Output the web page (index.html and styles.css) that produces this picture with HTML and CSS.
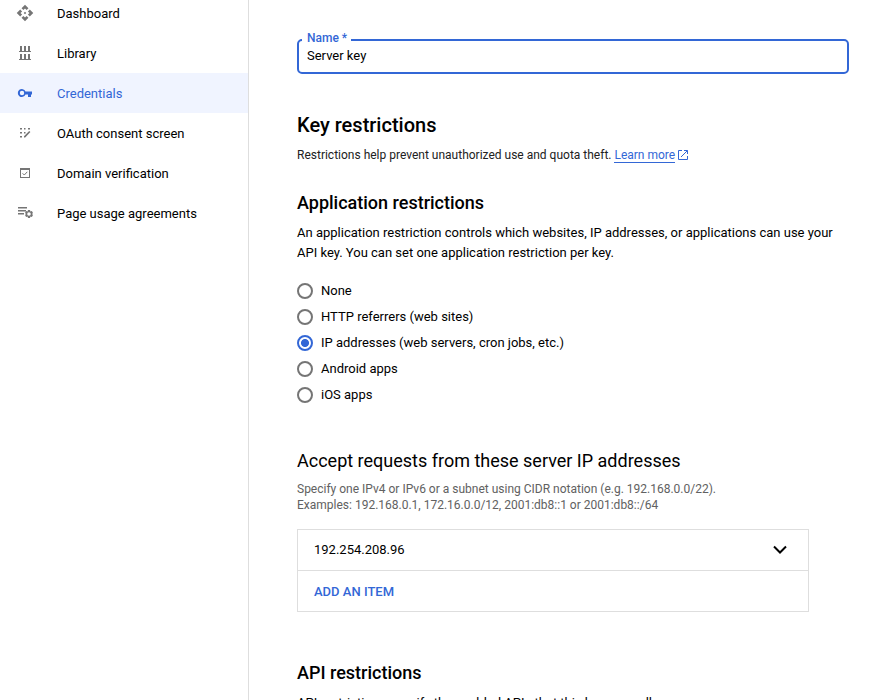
FILE: index.html
```html
<!DOCTYPE html>
<html lang="en">
<head>
<meta charset="utf-8">
<title>Credentials</title>
<link rel="stylesheet" href="styles.css">
</head>
<body>
<div class="layout">
  <nav class="sidebar">
    <a class="nav-item">
      <svg class="nav-icon" viewBox="0 0 24 24"><path d="M13.700 12L12 13.700 10.300 12l1.700-1.700zM12 6l2.120 2.120 2.500-2.500L12 1 7.380 5.620l2.500 2.500zM6 12l2.120-2.120-2.500-2.500L1 12l4.620 4.620 2.500-2.500zM18 12l-2.120 2.120 2.500 2.500L23 12l-4.620-4.620-2.500 2.500zM12 18l-2.120-2.120-2.500 2.500L12 23l4.620-4.620-2.500-2.500z"/></svg>
      <span>Dashboard</span>
    </a>
    <a class="nav-item">
      <svg class="nav-icon" viewBox="0 0 18 18"><path d="M3 7h12v1H3zM4 2h2v5H4zM8 2h2v5H8zM12 2h2v5h-2zM3 15h12v1H3zM4 10h2v5H4zM8 10h2v5H8zM12 10h2v5h-2z"/></svg>
      <span>Library</span>
    </a>
    <a class="nav-item active">
      <svg class="nav-icon" viewBox="0 0 18 18"><path fill-rule="evenodd" d="M9.500 7.500A4 4 0 1 0 9.500 10.500H12V13h3v-2.500h1v-3zM6 6.800a2.200 2.200 0 1 1 0 4.400 2.200 2.200 0 0 1 0-4.400z"/></svg>
      <span>Credentials</span>
    </a>
    <a class="nav-item">
      <svg class="nav-icon" viewBox="0 0 18 18"><path d="M4 4h2v1.500H4zM8 4h1.500v1.500H8zM12 4h2v1.500h-2zM4 8h2v1.500H4zM8 8h1.500v1.500H8zM4 12h2v1.500H4zM8 13.500v-1.300l5.200-5.200 1.200 1.100-5.200 5.400z"/></svg>
      <span>OAuth consent screen</span>
    </a>
    <a class="nav-item">
      <svg class="nav-icon" viewBox="0 0 18 18"><path fill-rule="evenodd" d="M4 4h10v10H4zM5 6v7h8V6z"/><path class="line" d="M6.600 9.300l1.700 1.700 3-3.200"/></svg>
      <span>Domain verification</span>
    </a>
    <a class="nav-item">
      <svg class="nav-icon" viewBox="0 0 18 18"><path d="M2 3h9v1.500H2zM2 6h8v1.500H2zM2 9h6v1.500H2z"/><path fill-rule="evenodd" d="M12 6h2l.4 1.400 1.500-.4 1.100 1.900-1 1.100 1 1.100-1.100 1.900-1.500-.4L14 14h-2l-.4-1.400-1.500.4L9 11.100l1-1.100-1-1.100L10.100 7l1.500.4zM13 8.200a1.800 1.800 0 1 0 0 3.600 1.800 1.800 0 0 0 0-3.600z"/></svg>
      <span>Page usage agreements</span>
    </a>
  </nav>
  <main class="content">
    <div class="field">
      <span class="field-label">Name *</span>
      <span class="field-value">Server key</span>
    </div>
    <h1 class="title">Key restrictions</h1>
    <p class="intro">Restrictions help prevent unauthorized use and quota theft. <a class="link">Learn more</a><svg class="external" viewBox="0 0 12 12"><path d="M5 1.500H1.500v9h9V7M7 1.500h3.500V5M10.500 1.500L4 8"/></svg></p>
    <h2 class="heading">Application restrictions</h2>
    <p class="text">An application restriction controls which websites, IP addresses, or applications can use your API key. You can set one application restriction per key.</p>
    <div class="radios">
      <label class="radio"><span class="dot"></span>None</label>
      <label class="radio"><span class="dot"></span>HTTP referrers (web sites)</label>
      <label class="radio"><span class="dot checked"></span>IP addresses (web servers, cron jobs, etc.)</label>
      <label class="radio"><span class="dot"></span>Android apps</label>
      <label class="radio"><span class="dot"></span>iOS apps</label>
    </div>
    <h3 class="subheading">Accept requests from these server IP addresses</h3>
    <p class="hint">Specify one IPv4 or IPv6 or a subnet using CIDR notation (e.g. 192.168.0.0/22).<br>Examples: 192.168.0.1, 172.16.0.0/12, 2001:db8::1 or 2001:db8::/64</p>
    <div class="panel">
      <div class="panel-row"><span>192.254.208.96</span><svg class="chevron" viewBox="0 0 16 10"><path d="M2 1.500l6 6 6-6"/></svg></div>
      <div class="panel-row add">ADD AN ITEM</div>
    </div>
    <h2 class="heading">API restrictions</h2>
    <p class="text">API restrictions specify the enabled APIs that this key can call</p>
  </main>
</div>
</body>
</html>
```
FILE: styles.css
```css
* { box-sizing: border-box; }
body {
  margin: 0;
  background: #fff;
  color: #000;
  font: 13px/20px Roboto, sans-serif;
}
h1, h2, h3, p { margin: 0; }
.layout { display: flex; height: 700px; overflow: hidden; }
.sidebar {
  flex: 0 0 249px;
  border-right: 1px solid #dedede;
}
.nav-item {
  display: flex;
  align-items: center;
  gap: 23px;
  height: 40px;
  padding-left: 16px;
}
.nav-item:first-child { margin-top: -7px; }
.nav-item span { padding-top: 2px; }
.nav-icon { width: 18px; height: 18px; fill: #757575; }
.line { fill: none; stroke: #757575; stroke-width: 1; }
.active { background: #f0f4ff; color: #3367d6; }
.active .nav-icon { fill: #3367d6; }
.content { flex: 1; padding: 39px 26px 0 48px; }
.field {
  position: relative;
  height: 35px;
  padding: 5px 8px;
  border: 2px solid #3367d6;
  border-radius: 5px;
}
.field-value { display: block; line-height: 20px; }
.field-label {
  position: absolute;
  left: 3px;
  top: -12px;
  padding: 0 4px 0 5px;
  background: #fff;
  color: #3367d6;
  font-size: 12px;
  font-weight: 500;
  line-height: 18px;
}
.title { margin-top: 39px; font-size: 20px; font-weight: 500; line-height: 24px; }
.intro { margin-top: 8px; font-size: 12px; color: #212121; }
.link { color: #3367d6; border-bottom: 1px solid #3367d6; }
.external {
  width: 12px;
  height: 12px;
  margin-left: 2px;
  vertical-align: -2px;
  fill: none;
  stroke: #3367d6;
}
.heading { margin-top: 26px; font-size: 18px; font-weight: 500; line-height: 24px; }
.text { margin-top: 8px; }
.radios { margin-top: 15px; }
.radio { display: flex; align-items: center; gap: 8px; height: 26px; }
.dot { width: 16px; height: 16px; border: 2px solid #757575; border-radius: 50%; }
.checked {
  border-color: #3367d6;
  background: radial-gradient(circle, #3367d6 3.6px, #fff 4.4px);
}
.subheading { margin-top: 41px; font-size: 18px; font-weight: 400; line-height: 24px; }
.hint { margin-top: 8px; font-size: 12px; line-height: 16px; color: #616161; }
.panel { width: 512px; margin: 16px 0 49px; border: 1px solid #dedede; }
.panel-row {
  display: flex;
  align-items: center;
  justify-content: space-between;
  height: 40px;
  padding: 0 20px 0 16px;
}
.add { height: 41px; padding-top: 2px; border-top: 1px solid #dedede; color: #3367d6; font-weight: 500; }
.chevron { width: 16px; height: 10px; fill: none; stroke: #000; stroke-width: 2; }
```
